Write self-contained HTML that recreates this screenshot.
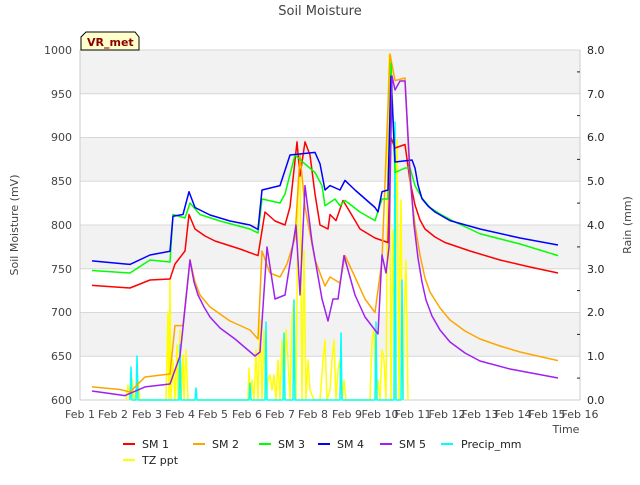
<!DOCTYPE html>
<html><head><meta charset="utf-8"><style>
body{margin:0;background:#fff;}
svg text{font-family:"DejaVu Sans","Liberation Sans",sans-serif;}
</style></head><body>
<svg width="640" height="480" xmlns="http://www.w3.org/2000/svg">
<rect width="640" height="480" fill="#fff"/>
<text x="320" y="15" text-anchor="middle" font-size="13" fill="#444">Soil Moisture</text>
<rect x="80" y="50" width="500" height="43.75" fill="#f2f2f2"/>
<rect x="80" y="137.5" width="500" height="43.75" fill="#f2f2f2"/>
<rect x="80" y="225" width="500" height="43.75" fill="#f2f2f2"/>
<rect x="80" y="312.5" width="500" height="43.75" fill="#f2f2f2"/>
<g stroke="#d8d8d8" stroke-width="1">
<line x1="80" y1="50" x2="580" y2="50"/><line x1="80" y1="93.75" x2="580" y2="93.75"/>
<line x1="80" y1="137.5" x2="580" y2="137.5"/><line x1="80" y1="181.25" x2="580" y2="181.25"/>
<line x1="80" y1="225" x2="580" y2="225"/><line x1="80" y1="268.75" x2="580" y2="268.75"/>
<line x1="80" y1="312.5" x2="580" y2="312.5"/><line x1="80" y1="356.25" x2="580" y2="356.25"/>
</g>
<line x1="80" y1="50" x2="80" y2="400" stroke="#ccc"/>
<line x1="580" y1="50" x2="580" y2="400" stroke="#ccc"/>
<line x1="80" y1="400" x2="580" y2="400" stroke="#ccc"/>
<g font-size="11" fill="#444" text-anchor="end">
<text x="72" y="54">1000</text><text x="72" y="98">950</text><text x="72" y="141">900</text><text x="72" y="185">850</text><text x="72" y="229">800</text><text x="72" y="273">750</text><text x="72" y="316">700</text><text x="72" y="360">650</text><text x="72" y="404">600</text>
</g>
<g font-size="11" fill="#222">
<text x="587" y="54">8.0</text><text x="587" y="98">7.0</text><text x="587" y="141">6.0</text><text x="587" y="185">5.0</text><text x="587" y="229">4.0</text><text x="587" y="273">3.0</text><text x="587" y="316">2.0</text><text x="587" y="360">1.0</text><text x="587" y="404">0.0</text>
</g>
<g stroke="#222"><line x1="577" y1="71.9" x2="580" y2="71.9"/><line x1="577" y1="115.6" x2="580" y2="115.6"/><line x1="577" y1="159.4" x2="580" y2="159.4"/><line x1="577" y1="203.1" x2="580" y2="203.1"/><line x1="577" y1="246.9" x2="580" y2="246.9"/><line x1="577" y1="290.6" x2="580" y2="290.6"/><line x1="577" y1="334.4" x2="580" y2="334.4"/><line x1="577" y1="378.1" x2="580" y2="378.1"/></g>
<g font-size="11" fill="#444" text-anchor="middle">
<text x="80" y="418">Feb 1</text><text x="113" y="418">Feb 2</text><text x="147" y="418">Feb 3</text><text x="180" y="418">Feb 4</text><text x="213" y="418">Feb 5</text><text x="247" y="418">Feb 6</text><text x="280" y="418">Feb 7</text><text x="313" y="418">Feb 8</text><text x="347" y="418">Feb 9</text><text x="380" y="418">Feb 10</text><text x="413" y="418">Feb 11</text><text x="447" y="418">Feb 12</text><text x="480" y="418">Feb 13</text><text x="513" y="418">Feb 14</text><text x="547" y="418">Feb 15</text><text x="580" y="418">Feb 16</text>
</g>
<text x="566" y="433" font-size="11" fill="#444" text-anchor="middle">Time</text>
<text transform="translate(18,225) rotate(-90)" font-size="11" fill="#444" text-anchor="middle">Soil Moisture (mV)</text>
<text transform="translate(631,225) rotate(-90)" font-size="11" fill="#444" text-anchor="middle">Rain (mm)</text>
<g fill="none" stroke-width="1.5" stroke-linejoin="round">
<polyline stroke="#ffff00" points="126,400 128,385 130,400 132,378 134,400 138,380 140,400 166,400 168,312 169,400 170,280 171,400 173,360 175,400 177,345 178,400 180,330 181,400 183,355 184,400 186,350 188,400 248,400 249,368 250,400 252,380 254,400 256,350 258,400 260,320 262,400 264,330 266,400 268,380 270,375 272,390 274,375 276,400 278,360 280,400 282,340 284,400 286,330 288,360 290,400 292,320 294,300 296,400 298,200 300,160 302,400 304,250 306,400 308,360 310,390 314,400 320,400 323,360 325,340 327,400 330,390 332,360 334,340 336,400 338,370 340,360 342,400 344,380 346,400 370,400 372,340 374,330 376,400 378,380 380,400 382,350 384,360 386,400 388,120 389,55 391,400 392,300 393,230 395,400 396,180 397,140 399,400 400,260 401,200 403,400 404,320 406,260 408,400"/>
<polyline stroke="#00ffff" points="130,400 131,367 132,400 136,400 137,356 138,400 179,400 180,345 181,400 195,400 196,388 197,400 249,400 250,383 251,400 265,400 266,322 267,400 283,400 284,333 285,400 293,400 294,300 295,400 340,400 341,333 342,400 375,400 376,322 377,400 394,400 395,122 396,400 401,400 402,280 403,400"/>
<polyline stroke="#ff0000" points="92,285.4 130,288 150,280 170,279 175,264 185,251 189,214.5 195,229 205,236 215,241 240,249 258,255.6 265,212 275,221 285,225 290,207 297,141.9 300,176 305,141.9 310,155 315,194 320,225 328,229 330,214.5 336,220.6 343,200.5 350,212 360,229 375,238 388,242.5 391,137.5 395,148 405,144.5 410,181 415,205 420,220 425,229 435,237 445,242.5 470,251 500,260 530,267 558,273"/>
<polyline stroke="#ffa500" points="92,386.9 120,389.5 130,392 145,377 170,374 175,325.6 183,325.6 190,260 195,282 200,295 210,307 230,321 250,330 258,339 262,251 270,273 280,277 287,264 295,238 300,155 305,207 315,260 325,286 330,277 340,283 345,255.6 355,277 365,299 375,312.5 382,260 390,54 395,80.6 405,78 410,181 415,225 420,255 425,278 430,292 440,308 450,320 465,331 480,339 500,346 520,352 558,360.6"/>
<polyline stroke="#00ff00" points="92,270.5 130,273 150,260 170,262 173,214.5 185,218 190,203 200,214.5 220,221 250,229 258,233 262,199 280,203 285,194 295,155 305,164 315,172.5 322,185.6 325,205.75 335,199 340,205.75 345,200.5 360,212 375,220.6 382,199 388,199 391,63 395,172.5 405,168 410,168 415,185.6 422,198 430,207.5 440,214 455,222 480,233.75 520,244 558,255.6"/>
<polyline stroke="#0000ff" points="92,260.9 130,264.4 150,255 170,251.25 173,216.25 183,214.5 189,191.75 195,207.5 210,215 230,221 250,225 258,229.4 262,190 280,185.6 290,155 315,152.4 320,163.75 325,190 330,185.6 340,190 345,180.4 355,190 375,207.5 378,211.9 382,191.75 388,190 391,76.25 395,162 412,160 415,168 418,185 422,198.75 428,206 435,212 450,220.6 480,229 520,238 558,245"/>
<polyline stroke="#a020f0" points="92,391 125,395.6 145,386.9 170,384 180,356 190,260 194,282 198,295 204,307 210,317 220,328 235,339 255,356 260,352 267,247 275,299 285,295 296,225 300,295 305,185.6 312,242 322,299 328,321 333,299 338,299 344,255.6 355,295 365,317 378,334 382,255 386,273 389,247 392,76 395,90 400,81 405,81 410,172.5 414,225 418,258 422,282 426,300 432,316 440,330 450,342 465,353 480,361 510,369 558,378"/>
</g>
<path d="M81,50 L81,37 L86,32 L135,32 L139,37 L139,50 Z" fill="#ffffcc" stroke="#000" stroke-width="1"/>
<text x="87" y="46" font-size="11" font-weight="bold" fill="#8b0000">VR_met</text>
<g font-size="11" fill="#222">
<line x1="123" y1="444" x2="135" y2="444" stroke="#ff0000" stroke-width="2"/><text x="142" y="448">SM 1</text>
<line x1="193" y1="444" x2="205" y2="444" stroke="#ffa500" stroke-width="2"/><text x="212" y="448">SM 2</text>
<line x1="259" y1="444" x2="271" y2="444" stroke="#00ff00" stroke-width="2"/><text x="278" y="448">SM 3</text>
<line x1="318" y1="444" x2="330" y2="444" stroke="#0000ff" stroke-width="2"/><text x="337" y="448">SM 4</text>
<line x1="380" y1="444" x2="392" y2="444" stroke="#a020f0" stroke-width="2"/><text x="399" y="448">SM 5</text>
<line x1="441" y1="444" x2="453" y2="444" stroke="#00ffff" stroke-width="2"/><text x="461" y="448">Precip_mm</text>
<line x1="123" y1="460" x2="135" y2="460" stroke="#ffff00" stroke-width="2"/><text x="142" y="464">TZ ppt</text>
</g>
</svg>
</body></html>
